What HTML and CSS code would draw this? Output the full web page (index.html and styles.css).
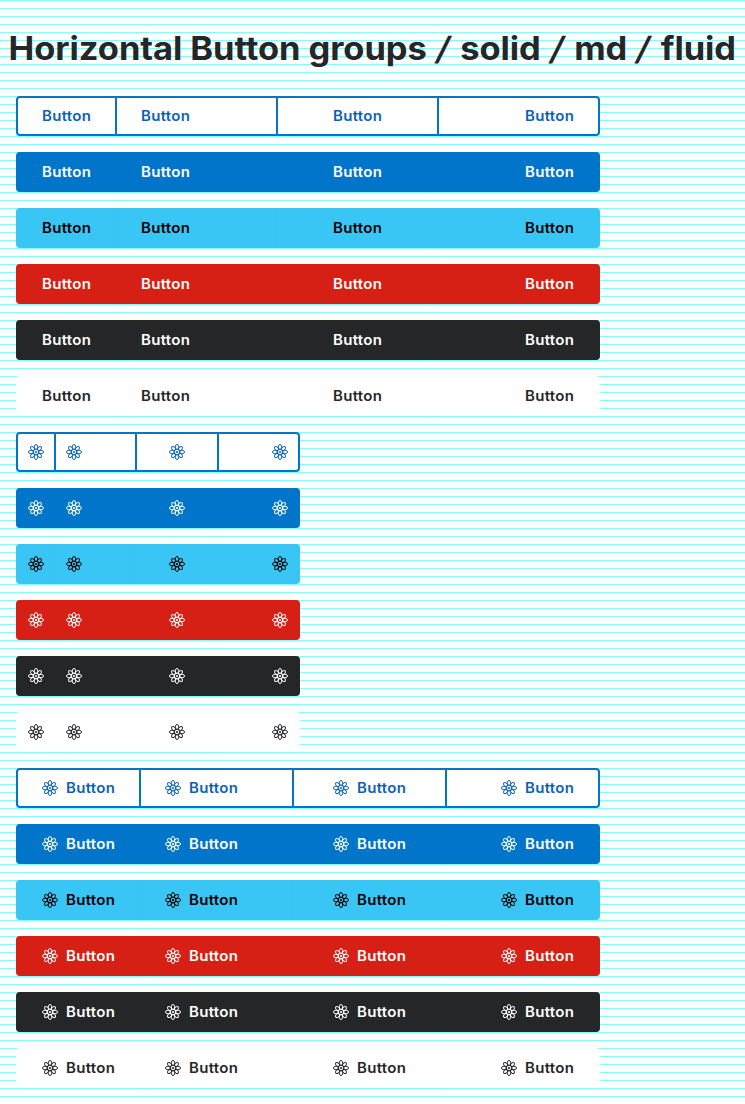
FILE: index.html
```html
<!DOCTYPE html>
<html lang="en">
<head>
<meta charset="utf-8">
<title>Button groups</title>
<link rel="stylesheet" href="styles.css">
</head>
<body>
<svg class="sprite" width="0" height="0">
  <symbol id="atom" viewBox="0 0 16 16">
    <g fill="none" stroke="currentColor" stroke-width=".95">
      <path id="petal" d="M7.1 5C5.9 3.4 6.2 .45 8 .45S10.1 3.4 8.9 5"/>
      <use href="#petal" transform="rotate(45 8 8) translate(0 .3)"/>
      <use href="#petal" transform="rotate(90 8 8)"/>
      <use href="#petal" transform="rotate(135 8 8) translate(0 .3)"/>
      <use href="#petal" transform="rotate(180 8 8)"/>
      <use href="#petal" transform="rotate(225 8 8) translate(0 .3)"/>
      <use href="#petal" transform="rotate(270 8 8)"/>
      <use href="#petal" transform="rotate(315 8 8) translate(0 .3)"/>
      <circle cx="8" cy="8" r="2.7" stroke-width="1.1"/>
    </g>
    <circle cx="8" cy="8" r="1.1" fill="currentColor"/>
  </symbol>
</svg>
<h1 class="title">Horizontal Button groups <span class="slash">/</span> solid <span class="slash">/</span> md <span class="slash">/</span> fluid</h1>
<main class="stack" id="stack"></main>
<script src="app.js"></script>
</body>
</html>
```
FILE: app.js
```js
const icon = '<svg class="icon"><use href="#atom"/></svg>';
const label = '<span class="label">Button</span>';
const contents = { text: label, compact: icon, both: icon + label };
const themes = ['outline', 'primary', 'info', 'danger', 'dark', 'light'];
const aligns = ['fit', 'start', 'center', 'end'];
const groups = Object.keys(contents).flatMap(kind => themes.map(theme =>
  `<div class="group ${kind} ${theme}">` +
  aligns.map(a => `<button class="btn ${a}">${contents[kind]}</button>`).join('') +
  '</div>'));
document.getElementById('stack').innerHTML = groups.join('');
```
FILE: styles.css
```css
* { box-sizing: border-box; }
body {
  margin: 0;
  min-height: 1104px;
  overflow: hidden;
  background: repeating-linear-gradient(to bottom, #80ffff 0, #80ffff 1px, #fff 1px, #fff 8px);
  font-family: Inter, "Liberation Sans", sans-serif;
}
.sprite { display: block; }
.title {
  width: 690px;
  height: 96px;
  margin: 0;
  padding-left: 8px;
  font-size: 32px;
  line-height: 97px;
  font-weight: 700;
  letter-spacing: -.05px;
  white-space: nowrap;
  color: #252628;
  transform: scaleX(1.076);
  transform-origin: left;
}
.slash {
  display: inline-block;
  margin: 0 2px;
  font-weight: 600;
  transform: skewX(-11deg);
}
.stack {
  display: flex;
  flex-direction: column;
  gap: 16px;
  padding-left: 16px;
}
.group { display: flex; width: 584px; height: 40px; }
.group.compact { width: 284px; }
.btn {
  display: flex;
  align-items: center;
  gap: 8px;
  flex: 1 1 0;
  height: 40px;
  margin: 0 0 0 -2px;
  padding: 0 24px;
  border: 2px solid var(--edge);
  background: var(--fill);
  color: var(--ink);
  font: 500 14px/20px Inter, "Liberation Sans", sans-serif;
  letter-spacing: .3px;
}
.compact .btn { padding: 0 10px; }
.btn.fit { flex: none; margin-left: 0; border-radius: 4px 0 0 4px; }
.btn.end { justify-content: flex-end; border-radius: 0 4px 4px 0; }
.btn.start { justify-content: flex-start; }
.btn.center { justify-content: center; }
.label {
  width: 49px;
  text-align: left;
  white-space: nowrap;
  font-weight: 570;
  transform: scaleX(1.07);
  transform-origin: left;
}
.icon { display: block; flex: none; width: 16px; height: 16px; }
.outline { --fill: #fff; --edge: #0075c9; --ink: #0a62b5; }
.primary { --fill: #0075c9; --edge: #0075c9; --ink: #fff; }
.info { --fill: #39c6f4; --edge: #39c6f4; --ink: #000; }
.danger { --fill: #d62015; --edge: #d62015; --ink: #fff; }
.dark { --fill: #252628; --edge: #252628; --ink: #fff; }
.light { --fill: #fff; --edge: #fff; --ink: #252628; }
.group:not(.outline) .btn { box-shadow: 0 0 1px rgba(0, 0, 0, .06); }
```
